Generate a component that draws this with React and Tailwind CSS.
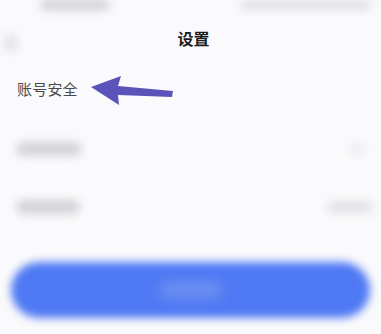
import React from 'react';

const cjk = { fontFamily: '"Noto Sans CJK SC", "Noto Sans", sans-serif' };

function Blob({ className }) {
  return <div className={`rounded-full blur-[5px] ${className}`} />;
}

export default function App() {
  return (
    <div className="w-[381px] h-[334px] bg-[#fafafc] flex flex-col overflow-hidden" style={cjk}>
      {/* status bar (blurred) */}
      <div className="h-[16px] flex items-start justify-between px-[40px] pt-0">
        <Blob className="w-[70px] h-[10px] bg-[#bdbdc1] opacity-70" />
        <Blob className="w-[130px] h-[10px] bg-[#d4d4d8] opacity-70 mr-[-30px]" />
      </div>

      {/* nav bar */}
      <div className="h-[44px] flex items-center relative">
        <Blob className="absolute left-[4px] top-[18px] w-[14px] h-[18px] bg-[#d4d4d8] opacity-60" />
        <div className="flex-1 text-center text-[16px] font-bold text-[#1c1c1c] pl-[6px] -mt-[1px]">设置</div>
      </div>

      {/* highlighted row */}
      <div className="h-[60px] flex items-center pl-[17px] pb-[2px]">
        <span className="text-[15px] text-[#4a4a4a] tracking-[0.2px]">账号安全</span>
        <svg width="90" height="32" viewBox="0 0 90 32" className="ml-[11px] mt-[6px]">
          <polygon points="2,11 32,0 29,10 84,15 83,21 29,19 30,29" fill="#5b53ba" />
        </svg>
      </div>

      {/* blurred rows */}
      <div className="h-[58px] flex items-center justify-between px-[16px]">
        <Blob className="w-[66px] h-[14px] bg-[#c9c9cd] opacity-80" />
        <Blob className="w-[16px] h-[10px] bg-[#e0e0e3] opacity-60" />
      </div>
      <div className="h-[58px] flex items-center justify-between pl-[16px] pr-[8px]">
        <Blob className="w-[64px] h-[14px] bg-[#c9c9cd] opacity-80" />
        <Blob className="w-[46px] h-[12px] bg-[#d8d8dc] opacity-70" />
      </div>

      {/* button */}
      <div className="px-[11px] pt-[26px]">
        <div className="h-[56px] rounded-full bg-[#4f79f4] blur-[4px] flex items-center justify-center">
          <div className="w-[64px] h-[18px] rounded-full bg-[#6a8ef2] blur-[4px]" />
        </div>
      </div>
    </div>
  );
}
